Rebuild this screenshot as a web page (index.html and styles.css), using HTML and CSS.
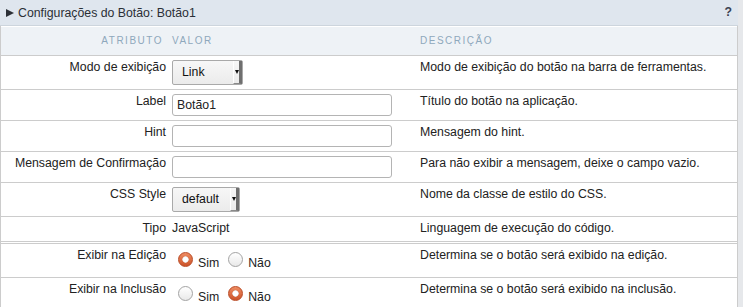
FILE: index.html
```html
<!DOCTYPE html>
<html lang="pt-BR">
<head>
  <meta charset="UTF-8">
  <title>Configurações do Botão</title>
  <link rel="stylesheet" href="styles.css">
</head>
<body>
  <div class="painel">
    <div class="titulo">
      <span class="seta"></span>
      <span class="titulo-texto">Configurações do Botão: Botão1</span>
      <span class="ajuda">?</span>
    </div>

    <div class="quadro">
      <table class="tabela">
        <colgroup>
          <col class="col-atributo">
          <col class="col-valor">
          <col>
        </colgroup>
        <thead>
          <tr>
            <th class="th-atributo">ATRIBUTO</th>
            <th>VALOR</th>
            <th>DESCRIÇÃO</th>
          </tr>
        </thead>
        <tbody>
          <tr>
            <td class="atributo">Modo de exibição</td>
            <td>
              <div class="seletor seletor-modo">
                <span class="seletor-texto">Link</span>
                <span class="seletor-seta"><span class="triangulo"></span></span>
              </div>
            </td>
            <td>Modo de exibição do botão na barra de ferramentas.</td>
          </tr>
          <tr>
            <td class="atributo">Label</td>
            <td><input type="text" class="campo" value="Botão1"></td>
            <td>Título do botão na aplicação.</td>
          </tr>
          <tr>
            <td class="atributo">Hint</td>
            <td><input type="text" class="campo" value=""></td>
            <td>Mensagem do hint.</td>
          </tr>
          <tr>
            <td class="atributo">Mensagem de Confirmação</td>
            <td><input type="text" class="campo" value=""></td>
            <td>Para não exibir a mensagem, deixe o campo vazio.</td>
          </tr>
          <tr>
            <td class="atributo">CSS Style</td>
            <td>
              <div class="seletor seletor-css">
                <span class="seletor-texto">default</span>
                <span class="seletor-seta"><span class="triangulo"></span></span>
              </div>
            </td>
            <td>Nome da classe de estilo do CSS.</td>
          </tr>
          <tr class="linha-tipo">
            <td class="atributo">Tipo</td>
            <td>JavaScript</td>
            <td>Linguagem de execução do código.</td>
          </tr>
          <tr class="linha-opcao">
            <td class="atributo">Exibir na Edição</td>
            <td>
              <span class="radio marcado"></span><span class="opcao">Sim</span><span class="radio"></span><span class="opcao">Não</span>
            </td>
            <td>Determina se o botão será exibido na edição.</td>
          </tr>
          <tr class="linha-opcao">
            <td class="atributo">Exibir na Inclusão</td>
            <td>
              <span class="radio"></span><span class="opcao">Sim</span><span class="radio marcado"></span><span class="opcao">Não</span>
            </td>
            <td>Determina se o botão será exibido na inclusão.</td>
          </tr>
        </tbody>
      </table>
    </div>
  </div>
</body>
</html>
```

FILE: styles.css
```css
body {
  margin: 0;
  padding: 0;
  background-color: #e6e8eb;
  font-family: "Liberation Sans", Arial, sans-serif;
  font-size: 12.3px;
  color: #222222;
}

.painel {
  width: 738px;
  background-color: #ffffff;
}

.titulo {
  display: flex;
  align-items: center;
  height: 26px;
  box-sizing: border-box;
  padding: 1px 6px 0 6px;
  background-color: #dfe6ee;
  border-bottom: 1px solid #cdd5dd;
  line-height: 15px;
  color: #2b2f36;
}

.seta {
  width: 0;
  height: 0;
  border-left: 8px solid #2b2f36;
  border-top: 4px solid transparent;
  border-bottom: 4px solid transparent;
  margin-right: 4px;
}

.ajuda {
  margin-left: auto;
  font-weight: bold;
  color: #3a4150;
  margin-top: -2px;
}

.quadro {
  border-left: 1px solid #cccccc;
  border-right: 1px solid #cccccc;
}

.tabela {
  width: 100%;
  border-collapse: separate;
  border-spacing: 0;
  table-layout: fixed;
}

.col-atributo {
  width: 170px;
}

.col-valor {
  width: 248px;
}

.tabela th {
  padding: 0 0 0 1px;
  line-height: 28px;
  font-size: 10px;
  font-weight: normal;
  letter-spacing: 1.5px;
  text-align: left;
  color: #8ea8bc;
  background-color: #eef2f6;
  border-top: 1px solid #ffffff;
  border-bottom: 1px solid #cccccc;
}

.tabela th.th-atributo {
  text-align: right;
  padding-right: 8px;
}

.tabela td {
  padding: 4px 0 4px 1px;
  line-height: 15px;
  vertical-align: top;
  border-bottom: 1px solid #cccccc;
}

.tabela td.atributo {
  text-align: right;
  padding-right: 5px;
}

.linha-tipo td {
  padding-bottom: 5px;
  border-bottom: 3px double #cccccc;
}

.linha-opcao td {
  padding-bottom: 6px;
}

.campo {
  display: block;
  width: 220px;
  height: 22px;
  box-sizing: border-box;
  margin: 0;
  padding: 0 4px;
  border: 1px solid #b4b4b4;
  border-radius: 3px;
  font-family: "Liberation Sans", Arial, sans-serif;
  font-size: 12.3px;
  color: #222222;
  background-color: #ffffff;
}

.seletor {
  display: flex;
  height: 25px;
  box-sizing: border-box;
  border: 1px solid #a9a9a9;
  border-radius: 2px;
  background: linear-gradient(#f7f7f7, #ebebeb);
}

.seletor-modo {
  width: 71px;
}

.seletor-css {
  width: 68px;
}

.seletor-texto {
  padding-left: 9px;
  line-height: 23px;
  color: #111111;
}

.seletor-seta {
  display: flex;
  align-items: flex-end;
  justify-content: center;
  margin-left: auto;
  width: 5px;
  padding-bottom: 9px;
  box-sizing: content-box;
  border-left: 1px solid #ffffff;
  border-right: 3px solid #6f6f6f;
  border-bottom: 1px solid #8a8a8a;
}

.triangulo {
  width: 0;
  height: 0;
  border-top: 4px solid #111111;
  border-left: 2.5px solid transparent;
  border-right: 2.5px solid transparent;
}

.radio {
  display: inline-block;
  width: 15px;
  height: 15px;
  box-sizing: border-box;
  margin: 4px 5px 0 6px;
  border: 1px solid #a3a3a3;
  border-radius: 50%;
  background: linear-gradient(#ffffff, #e9e9e9);
  vertical-align: baseline;
}

.radio.marcado {
  border-color: #b94a25;
  background:
    radial-gradient(circle, #ffffff 0, #ffffff 2.2px, #e2d6d0 3px, transparent 3.4px),
    linear-gradient(#ee8c62, #cc5329);
}

.opcao {
  margin-right: 3px;
}
```
